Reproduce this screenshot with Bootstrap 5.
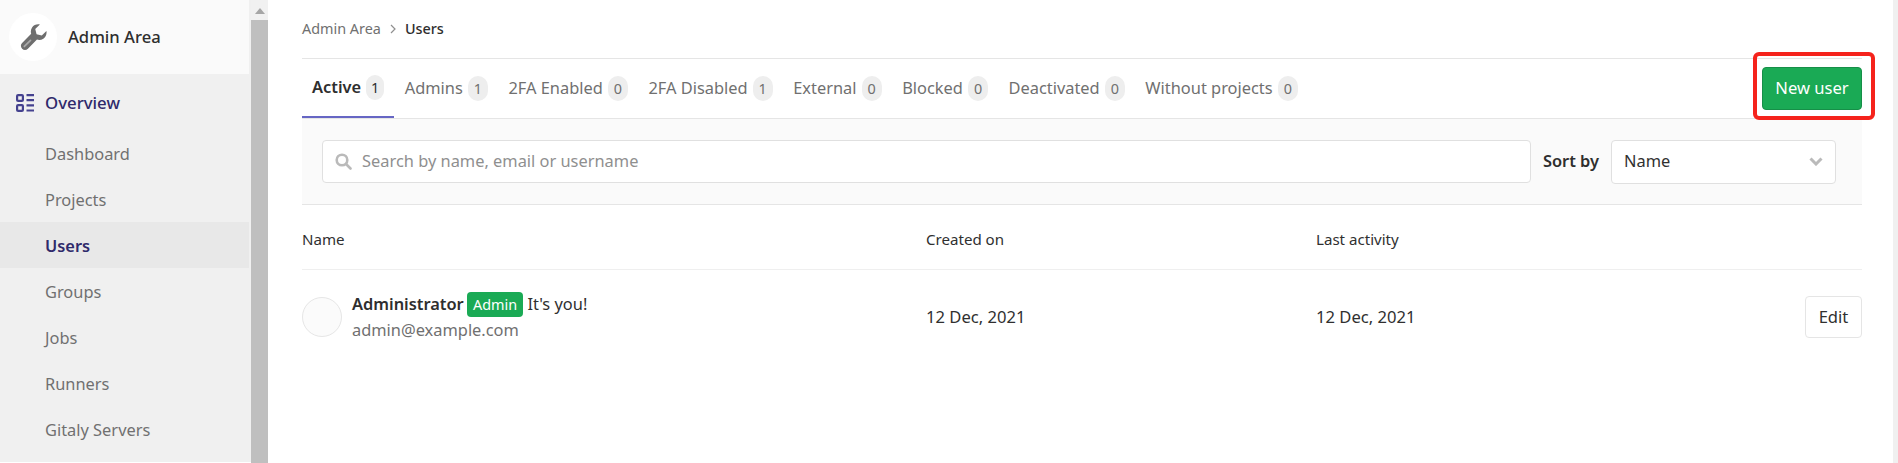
<!DOCTYPE html>
<html lang="en">
<head>
    <meta charset="UTF-8">
    <title>Users · Admin Area</title>
    <link href="https://cdn.jsdelivr.net/npm/bootstrap@5.3.0/dist/css/bootstrap.min.css" rel="stylesheet">
    <style>
        html, body { height: 100%; overflow: hidden; }
        body { font-family: "Noto Sans", sans-serif; font-size: 16.4px; color: #303030; background: #fff; }
        .app-shell { height: 463px; }
        .side-nav { width: 251px; background: #f0f0f0; height: 462px; flex: none; overflow: hidden; }
        .side-head { height: 74px; width: 249px; background: #fafafa; padding-left: 9px; font-weight: 500; font-size: 16.6px; color: #2e2e2e; }
        .side-logo { width: 48px; height: 48px; border-radius: 50%; background: #fff; margin-right: 11px; }
        .side-parent { height: 56px; padding: 1px 0 0 16px; color: #2f2a6b; font-weight: 500; font-size: 16.8px; }
        .side-parent svg { margin-right: 11px; }
        .side-link { display: block; height: 46px; line-height: 48px; padding-left: 45px; width: 249px; color: #707070; text-decoration: none; }
        .side-link.is-current { background: #e8e8e8; color: #2f2a6b; font-weight: 600; }
        .side-scroll { width: 17px; height: 463px; background: #bfbfbf; flex: none; }
        .side-scroll-top { height: 20px; background: #f1f1f1; }
        .side-scroll-top div { width: 0; height: 0; border: 5px solid transparent; border-top: 0; border-bottom: 6px solid #a6a6a6; }
        .main-pane { flex: 1; padding: 0 31px 0 34px; border-right: 5px solid #f0f0f0; }
        .crumbs { height: 59px; border-bottom: 1px solid #e5e5e5; font-size: 14.4px; color: #707070; }
        .crumbs svg { margin: 0 9px 0 9px; }
        .crumbs b { font-weight: 500; color: #2e2e2e; }
        .tab-bar { height: 59px; position: relative; }
        .tab-list { height: 59px; gap: 0.4px; }
        .tab-item { height: 59px; padding: 0 10px; color: #707070; text-decoration: none; }
        .tab-item.is-on { color: #2e2e2e; font-weight: 600; border-bottom: 2px solid #6666c4; }
        .tab-item.is-on .tab-num { padding: 0 5px; }
        .tab-num { min-width: 18px; height: 25px; line-height: 25px; padding: 0 6px; margin-left: 5px; background: #eee; border-radius: 12px; font-size: 14.4px; font-weight: 400; text-align: center; }
        .btn-new { background: #1aaa55; border: 1px solid #168f48; color: #fff; width: 100px; height: 43px; font-size: 16.6px; padding: 0; border-radius: 4px; margin-top: 8px; }
        .red-frame { position: absolute; right: -13px; top: -7px; width: 122px; height: 68px; border: 4px solid #f5231c; border-radius: 6px; pointer-events: none; }
        .filter-bar { height: 87px; background: #fafafa; border-top: 1px solid #e5e5e5; border-bottom: 1px solid #e5e5e5; padding: 0 26px 0 20px; }
        .search-box { height: 43px; background: #fff; border: 1px solid #e0e0e0; border-radius: 4px; padding-left: 12px; color: #8f8f8f; }
        .search-box svg { margin-right: 10px; }
        .sort-label { margin: 0 12px 0 12px; font-weight: 600; color: #2e2e2e; white-space: nowrap; }
        .sort-box { width: 225px; height: 44px; background: #fff; border: 1px solid #e0e0e0; border-radius: 4px; padding: 0 12px; flex: none; }
        .user-grid { display: grid; grid-template-columns: 624px 390px 1fr auto; align-items: center; }
        .grid-head { height: 65px; padding-top: 4px; border-bottom: 1px solid #efefef; font-size: 15.1px; }
        .grid-row { height: 94px; font-size: 16.6px; }
        .avatar-blank { width: 40px; height: 40px; border-radius: 50%; border: 1px solid #e6e6e6; background: #fbfbfb; margin-right: 10px; flex: none; }
        .user-cell { font-size: 16.4px; }
        .user-name { font-weight: 600; color: #2e2e2e; }
        .user-mail { color: #707070; line-height: 26px; }
        .user-line { line-height: 26px; }
        .tag-admin { display: inline-block; background: #1aaa55; color: #fff; font-size: 14.4px; line-height: 25px; height: 25px; padding: 0 6px; border-radius: 4px; margin: 0 0 0 -1px; }
        .btn-edit { width: 57px; height: 42px; padding: 0; background: #fff; border: 1px solid #e5e5e5; border-radius: 4px; font-size: 16.6px; color: #303030; }
    </style>
</head>
<body>
<div class="app-shell d-flex">
    <nav class="side-nav">
        <div class="side-head d-flex align-items-center">
            <div class="side-logo d-flex align-items-center justify-content-center">
                <svg width="27" height="27" viewBox="0 0 28 28" fill="#6e6e6e"><path d="M27.400 7.200c.6 3.200-.6 6.400-3.200 8.100-2 1.300-4.400 1.600-6.600.9L8.200 25.600c-1.700 1.700-4.400 1.700-6 0-1.700-1.700-1.700-4.400 0-6l9.400-9.400c-.7-2.200-.4-4.600.9-6.600C14.200 1 17.400-.2 20.600.4L15.800 5.200l1.400 5.400 5.400 1.400 4.800-4.800z"/><path d="M4.500 23.300l6.400-6.400" stroke="#a8a8a8" stroke-width="1.800" stroke-linecap="round"/></svg>
            </div>
            Admin Area
        </div>
        <div class="side-parent d-flex align-items-center">
            <svg width="18" height="18" viewBox="0 0 18 18" fill="none" stroke="#45428f" stroke-width="2.200"><rect x="1.100" y="1.100" width="5.800" height="5.800" rx="1"/><rect x="1.100" y="11.100" width="5.800" height="5.800" rx="1"/><path d="M10.500 1.200h7.500M10.500 6.200h7.500M10.500 11.400h7.500M10.500 16.500h7.500"/></svg>
            Overview
        </div>
        <a class="side-link" href="#">Dashboard</a>
        <a class="side-link" href="#">Projects</a>
        <a class="side-link is-current" href="#">Users</a>
        <a class="side-link" href="#">Groups</a>
        <a class="side-link" href="#">Jobs</a>
        <a class="side-link" href="#">Runners</a>
        <a class="side-link" href="#">Gitaly Servers</a>
    </nav>
    <div class="side-scroll">
        <div class="side-scroll-top d-flex justify-content-center pt-2"><div></div></div>
    </div>
    <main class="main-pane">
        <div class="crumbs d-flex align-items-center">
            Admin Area
            <svg width="6" height="10" viewBox="0 0 6 10" fill="none" stroke="#8f8f8f" stroke-width="1.200"><path d="M1 1l4 4-4 4"/></svg>
            <b>Users</b>
        </div>
        <div class="tab-bar d-flex justify-content-between">
            <div class="tab-list d-flex">
                <a class="tab-item is-on d-flex align-items-center" href="#">Active<span class="tab-num">1</span></a>
                <a class="tab-item d-flex align-items-center" href="#">Admins<span class="tab-num">1</span></a>
                <a class="tab-item d-flex align-items-center" href="#">2FA Enabled<span class="tab-num">0</span></a>
                <a class="tab-item d-flex align-items-center" href="#">2FA Disabled<span class="tab-num">1</span></a>
                <a class="tab-item d-flex align-items-center" href="#">External<span class="tab-num">0</span></a>
                <a class="tab-item d-flex align-items-center" href="#">Blocked<span class="tab-num">0</span></a>
                <a class="tab-item d-flex align-items-center" href="#">Deactivated<span class="tab-num">0</span></a>
                <a class="tab-item d-flex align-items-center" href="#">Without projects<span class="tab-num">0</span></a>
            </div>
            <button class="btn btn-new" type="button">New user</button>
            <div class="red-frame"></div>
        </div>
        <div class="filter-bar d-flex align-items-center">
            <div class="search-box flex-grow-1 d-flex align-items-center">
                <svg width="17" height="17" viewBox="0 0 17 17" fill="none" stroke="#bababa" stroke-width="2.600"><circle cx="7" cy="7" r="5.300"/><path d="M11 11l4.500 4.500" stroke-linecap="round"/></svg>
                Search by name, email or username
            </div>
            <span class="sort-label">Sort by</span>
            <div class="sort-box d-flex align-items-center justify-content-between">
                Name
                <svg width="14" height="9" viewBox="0 0 14 9" fill="none" stroke="#bababa" stroke-width="3"><path d="M1.500 1.500L7 7l5.500-5.500"/></svg>
            </div>
        </div>
        <div class="user-grid grid-head">
            <div>Name</div>
            <div>Created on</div>
            <div>Last activity</div>
            <div></div>
        </div>
        <div class="user-grid grid-row">
            <div class="user-cell d-flex align-items-center">
                <div class="avatar-blank"></div>
                <div>
                    <div class="user-line"><span class="user-name">Administrator</span> <span class="tag-admin">Admin</span> <span>It's you!</span></div>
                    <div class="user-mail">admin@example.com</div>
                </div>
            </div>
            <div>12 Dec, 2021</div>
            <div>12 Dec, 2021</div>
            <button class="btn btn-edit" type="button">Edit</button>
        </div>
    </main>
</div>
<script src="https://cdn.jsdelivr.net/npm/bootstrap@5.3.0/dist/js/bootstrap.bundle.min.js"></script>
</body>
</html>
